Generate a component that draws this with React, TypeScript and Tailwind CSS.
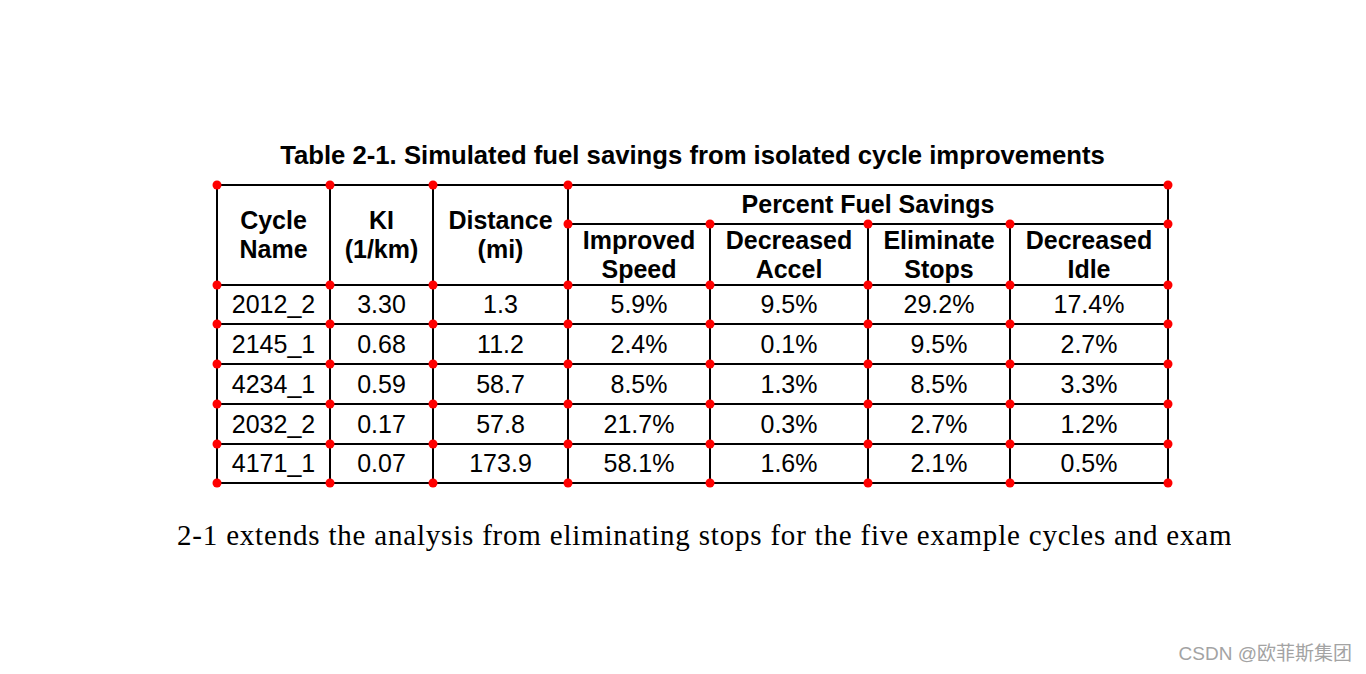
const cols = [1, 114, 217, 352, 494, 652, 794, 952];
const rowYs = [101, 140, 180, 220, 260, 299];

const dots: [number, number][] = [
  ...[1, 114, 217, 352, 952].map((x) => [x, 1] as [number, number]),
  ...[352, 494, 652, 794, 952].map((x) => [x, 40] as [number, number]),
  ...rowYs.flatMap((y) => cols.map((x) => [x, y] as [number, number])),
];

const rows = [
  ["2012_2", "3.30", "1.3", "5.9%", "9.5%", "29.2%", "17.4%"],
  ["2145_1", "0.68", "11.2", "2.4%", "0.1%", "9.5%", "2.7%"],
  ["4234_1", "0.59", "58.7", "8.5%", "1.3%", "8.5%", "3.3%"],
  ["2032_2", "0.17", "57.8", "21.7%", "0.3%", "2.7%", "1.2%"],
  ["4171_1", "0.07", "173.9", "58.1%", "1.6%", "2.1%", "0.5%"],
];

function Head({ children, className = "" }: { children: React.ReactNode; className?: string }) {
  return (
    <div
      className={
        "bg-white flex flex-col items-center justify-center text-center font-bold text-[25px] leading-[29px] " +
        className
      }
    >
      {children}
    </div>
  );
}

export default function App() {
  return (
    <div
      className="relative h-[674px] w-full overflow-hidden bg-white text-black"
      style={{ fontFamily: '"Liberation Sans", Arial, sans-serif' }}
    >
      <div className="ml-[216px] w-[953px] pt-[140px]">
        <h1 className="whitespace-nowrap text-center text-[25.7px] font-bold leading-[30px]">
          Table 2-1. Simulated fuel savings from isolated cycle improvements
        </h1>

        <div className="relative mt-[14px]">
          <div className="grid grid-cols-[111px_101px_133px_140px_156px_140px_156px] grid-rows-[37px_59px_37px_38px_38px_38px_37px] gap-[2px] bg-black p-[2px]">
            <Head className="row-span-2">
              <span>Cycle</span>
              <span>Name</span>
            </Head>
            <Head className="row-span-2">
              <span>KI</span>
              <span>(1/km)</span>
            </Head>
            <Head className="row-span-2">
              <span>Distance</span>
              <span>(mi)</span>
            </Head>
            <Head className="col-span-4">Percent Fuel Savings</Head>
            <Head>
              <span>Improved</span>
              <span>Speed</span>
            </Head>
            <Head>
              <span>Decreased</span>
              <span>Accel</span>
            </Head>
            <Head>
              <span>Eliminate</span>
              <span>Stops</span>
            </Head>
            <Head>
              <span>Decreased</span>
              <span>Idle</span>
            </Head>
            {rows.map((r) =>
              r.map((v, i) => (
                <div
                  key={r[0] + i}
                  className="flex items-center justify-center bg-white text-[25px] leading-none"
                >
                  {v}
                </div>
              ))
            )}
          </div>
          {dots.map(([x, y], i) => (
            <span
              key={i}
              className="absolute h-[9px] w-[9px] -translate-x-1/2 -translate-y-1/2 rounded-full bg-[#ff0000]"
              style={{ left: x, top: y }}
            />
          ))}
        </div>

        {/* page excerpt, cut at both sides like the scan */}
        <div className="-ml-[47px] mt-[33px] w-[1062px] overflow-hidden">
          <p
            className="-ml-[68px] whitespace-nowrap text-[29px] leading-[36px] tracking-[0.8px]"
            style={{ fontFamily: '"Liberation Serif", "Times New Roman", serif' }}
          >
            Table 2-1 extends the analysis from eliminating stops for the five example cycles and examines
          </p>
        </div>
      </div>

      <div
        className="absolute bottom-[6px] right-[14px] text-[19px] text-[#a3a3a3]"
        style={{ fontFamily: '"Liberation Sans", "Noto Sans CJK SC", sans-serif' }}
      >
        CSDN @欧菲斯集团
      </div>
    </div>
  );
}
